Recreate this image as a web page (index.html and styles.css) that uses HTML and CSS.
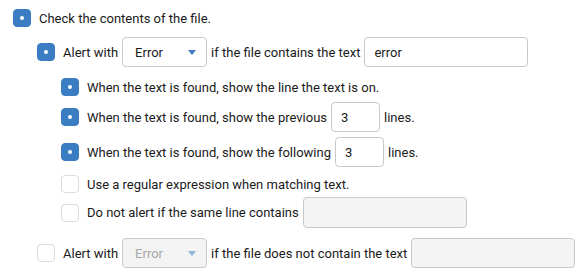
FILE: index.html
```html
<!DOCTYPE html>
<html lang="en">
<head>
    <meta charset="UTF-8">
    <title>File Content Check</title>
    <link rel="stylesheet" href="styles.css">
</head>
<body>
    <div class="rule">
        <div class="row row-top">
            <span class="check on"></span>
            <span>Check the contents of the file.</span>
        </div>

        <div class="group">
            <div class="row row-field">
                <span class="check on"></span>
                <span>Alert with</span>
                <div class="select"><span>Error</span><span class="caret"></span></div>
                <span>if the file contains the text</span>
                <input class="text-input" type="text" value="error">
            </div>

            <div class="group options">
                <div class="row row-plain">
                    <span class="check on"></span>
                    <span>When the text is found, show the line the text is on.</span>
                </div>
                <div class="row row-field prev">
                    <span class="check on"></span>
                    <span>When the text is found, show the previous</span>
                    <input class="num-input" type="text" value="3">
                    <span>lines.</span>
                </div>
                <div class="row row-field next">
                    <span class="check on"></span>
                    <span>When the text is found, show the following</span>
                    <input class="num-input" type="text" value="3">
                    <span>lines.</span>
                </div>
                <div class="row row-plain regex">
                    <span class="check"></span>
                    <span>Use a regular expression when matching text.</span>
                </div>
                <div class="row row-field ignore">
                    <span class="check"></span>
                    <span>Do not alert if the same line contains</span>
                    <input class="text-input" type="text" disabled>
                </div>
            </div>

            <div class="row row-field missing">
                <span class="check"></span>
                <span>Alert with</span>
                <div class="select disabled"><span>Error</span><span class="caret"></span></div>
                <span>if the file does not contain the text</span>
                <input class="text-input" type="text" disabled>
            </div>
        </div>
    </div>
</body>
</html>
```

FILE: styles.css
```css
:root {
    --blue: #3b7dc2;
    --text-color: #1a1a1a;
    --border: #c9c9c9;
}

* {
    margin: 0;
    padding: 0;
    box-sizing: border-box;
}

body {
    font-family: Roboto, "Noto Sans", sans-serif;
    font-size: 13px;
    color: var(--text-color);
    background: #fff;
    padding: 8px 4px 8px 13px;
}

.row {
    display: flex;
    align-items: center;
    gap: 4px;
    white-space: nowrap;
}

.row > * {
    flex-shrink: 0;
}

.row-top,
.row-plain {
    height: 20px;
}

.row-field {
    height: 30px;
}

.check {
    width: 18px;
    height: 18px;
    border-radius: 4px;
    border: 1px solid #dcdcdc;
    background: #fff;
    margin-right: 4px;
    position: relative;
}

.check.on {
    background: var(--blue);
    border-color: var(--blue);
}

.check.on::after {
    content: "";
    position: absolute;
    left: 6px;
    top: 6px;
    width: 4px;
    height: 4px;
    border-radius: 50%;
    background: #fff;
}

.group {
    padding-left: 24px;
    margin-top: 9px;
}

.options {
    margin-top: 10px;
    padding-left: 24px;
}

.prev { margin-top: 5px; }
.next { margin-top: 5px; }
.regex { margin-top: 7px; }
.ignore { margin-top: 3px; height: 31px; }
.missing { margin-top: 10px; }

.select {
    width: 85px;
    height: 30px;
    border: 1px solid var(--border);
    border-radius: 4px;
    display: flex;
    align-items: center;
    justify-content: space-between;
    padding: 0 10px 0 12px;
}

.caret {
    width: 0;
    height: 0;
    border-left: 4px solid transparent;
    border-right: 4px solid transparent;
    border-top: 5px solid var(--blue);
}

.select.disabled {
    background: #f3f3f3;
    color: #a8a8a8;
}

.select.disabled .caret {
    border-top-color: #8fb3d9;
}

input {
    font: inherit;
    color: var(--text-color);
    height: 30px;
    border: 1px solid var(--border);
    border-radius: 4px;
    outline: none;
}

.text-input {
    width: 164px;
    padding: 0 9px;
}

.ignore .text-input {
    height: 31px;
}

.num-input {
    width: 49px;
    padding: 0 9px;
}

input:disabled {
    background: #f4f4f4;
}
```
